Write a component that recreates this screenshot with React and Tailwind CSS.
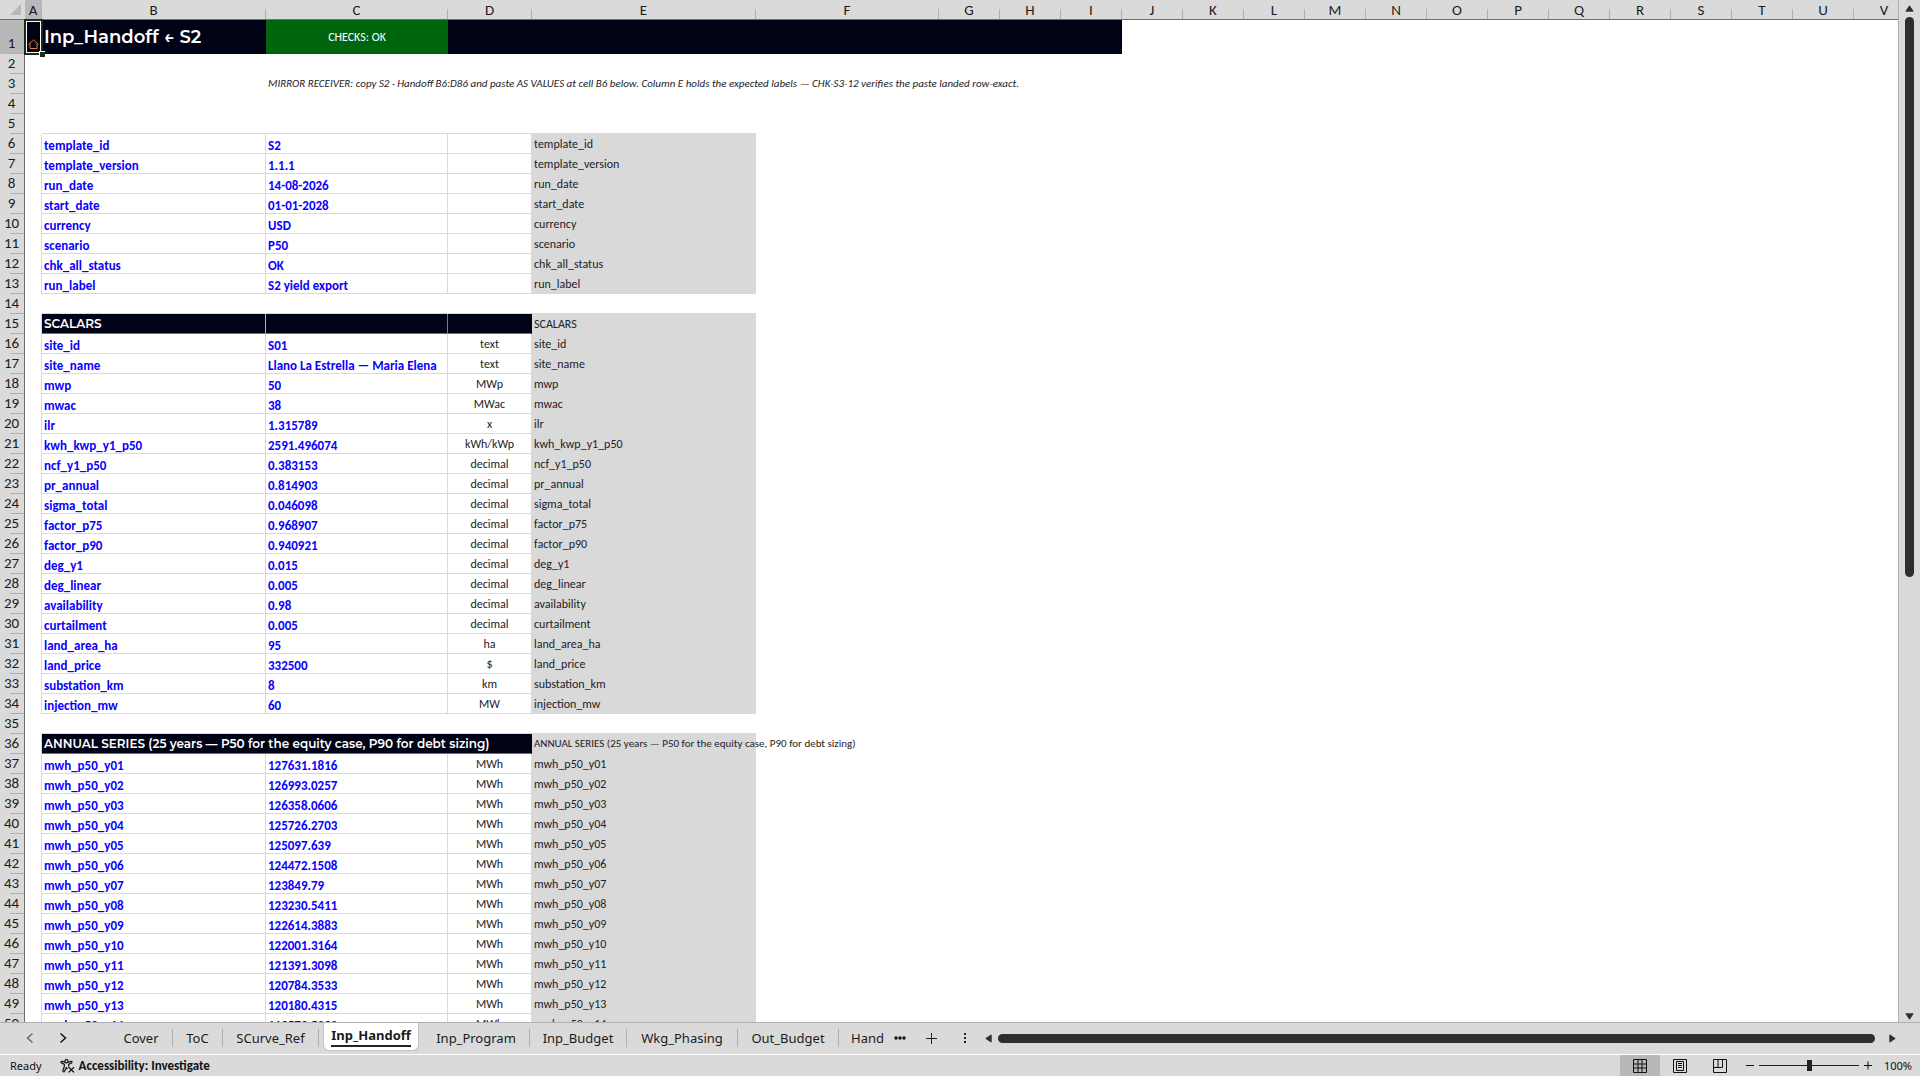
import React from 'react';

const meta = [
  ['template_id', 'S2'],
  ['template_version', '1.1.1'],
  ['run_date', '14-08-2026'],
  ['start_date', '01-01-2028'],
  ['currency', 'USD'],
  ['scenario', 'P50'],
  ['chk_all_status', 'OK'],
  ['run_label', 'S2 yield export'],
];

const scalars = [
  ['site_id', 'S01', 'text'],
  ['site_name', 'Llano La Estrella — Maria Elena', 'text'],
  ['mwp', '50', 'MWp'],
  ['mwac', '38', 'MWac'],
  ['ilr', '1.315789', 'x'],
  ['kwh_kwp_y1_p50', '2591.496074', 'kWh/kWp'],
  ['ncf_y1_p50', '0.383153', 'decimal'],
  ['pr_annual', '0.814903', 'decimal'],
  ['sigma_total', '0.046098', 'decimal'],
  ['factor_p75', '0.968907', 'decimal'],
  ['factor_p90', '0.940921', 'decimal'],
  ['deg_y1', '0.015', 'decimal'],
  ['deg_linear', '0.005', 'decimal'],
  ['availability', '0.98', 'decimal'],
  ['curtailment', '0.005', 'decimal'],
  ['land_area_ha', '95', 'ha'],
  ['land_price', '332500', '$'],
  ['substation_km', '8', 'km'],
  ['injection_mw', '60', 'MW'],
];

const annual = [
  '127631.1816', '126993.0257', '126358.0606', '125726.2703', '125097.639',
  '124472.1508', '123849.79', '123230.5411', '122614.3883', '122001.3164',
  '121391.3098', '120784.3533', '120180.4315', '119579.5293',
].map((v, i) => ['mwh_p50_y' + String(i + 1).padStart(2, '0'), v, 'MWh']);

const annualTitle = 'ANNUAL SERIES (25 years — P50 for the equity case, P90 for debt sizing)';

const columns = 'ABCDEFGHIJKLMNOPQRSTUV'.split('');

function colClass(c) {
  return {
    A: 'w-[17px]', B: 'w-[224px]', C: 'w-[182px]', D: 'w-[84px]', E: 'w-[224px]', F: 'w-[183px]',
  }[c] || 'w-[61px]';
}

function RowHead({ n, tall }) {
  return (
    <th
      scope="row"
      className={
        tall
          ? 'h-[34px] border-r border-[#6e6e6e] bg-[#b8b8b8] p-0 align-bottom font-normal'
          : 'h-5 border-r border-[#6e6e6e] bg-[#dadada] p-0 align-bottom font-normal'
      }
    >
      <div className="flex flex-col items-end">
        <span className="w-full pr-px text-center text-[15px] leading-[19px]">{n}</span>
        <span className="h-px w-[14px] bg-[#b0b0b0]" />
      </div>
    </th>
  );
}

const line = 'border-[#d9d9d9]';

function BlankRow({ n, under, children }) {
  const cell = under ? `h-5 border-b p-0 ${line}` : 'h-5 p-0';
  return (
    <tr>
      <RowHead n={n} />
      <td className="h-5 p-0" />
      <td className={cell} />
      <td className={cell}>{children}</td>
      <td className={cell} />
      <td className={cell} />
      <td colSpan={17} className="h-5 p-0" />
    </tr>
  );
}

function Expected({ children, small }) {
  return (
    <td className="h-5 bg-[#d9d9d9] p-0 pl-[2px] text-[#1c2229]">
      <div className={small ? 'w-0 whitespace-nowrap text-[11px] leading-[18px]' : 'whitespace-nowrap text-[12px] leading-[18px]'}>{children}</div>
    </td>
  );
}

function DataRow({ n, row }) {
  const [key, value, unit] = row;
  return (
    <tr>
      <RowHead n={n} />
      <td className={`h-5 border-r p-0 ${line}`} />
      <td className={`h-5 border-r border-b p-0 pl-[2px] align-bottom font-bold text-[#0a00ff] ${line}`}>
        <div className="text-[13px] leading-[15px]">{key}</div>
      </td>
      <td className={`h-5 border-r border-b p-0 pl-[2px] align-bottom font-bold text-[#0a00ff] ${line}`}>
        <div className="whitespace-nowrap text-[13px] leading-[15px]">{value}</div>
      </td>
      <td className={`h-5 border-r border-b p-0 text-center text-[12px] leading-[18px] text-[#1c2229] ${line}`}>{unit}</td>
      <Expected>{key}</Expected>
      <td colSpan={17} className="h-5 p-0" />
    </tr>
  );
}

const heading = 'h-5 border-b border-[#6d6d8c] bg-[#000215] p-0 pl-[2px] text-left text-[12px] leading-[18px] font-semibold text-white font-[Montserrat,Lato,sans-serif] whitespace-nowrap';

function Sheet() {
  return (
    <table className="w-[1915px] table-fixed border-separate border-spacing-0">
      <colgroup>
        <col className="w-[25px]" />
        {columns.map((c) => <col key={c} className={colClass(c)} />)}
      </colgroup>
      <thead>
        <tr>
          <th className="h-5 border-b border-[#6e6e6e] bg-[#dadada] p-0">
            <svg viewBox="0 0 11 11" className="ml-[10px] size-[11px]"><path d="M11 0V11H0Z" fill="#b8b8b8" /></svg>
          </th>
          {columns.map((c) => (
            <th
              key={c}
              scope="col"
              className={
                c === 'A'
                  ? 'h-5 border-b border-[#6e6e6e] bg-[#b8b8b8] p-0 font-normal'
                  : 'h-5 border-b border-[#6e6e6e] bg-[#dadada] p-0 font-normal'
              }
            >
              <div className="flex h-[19px] items-end">
                <span className="flex-1 text-center text-[15px] leading-[18px]">{c}</span>
                <span className="h-[10px] w-px bg-[#b0b0b0]" />
              </div>
            </th>
          ))}
        </tr>
      </thead>
      <tbody>
        <tr>
          <RowHead n={1} tall />
          <td className="relative h-[34px] bg-[#000215] p-0">
            <div className="absolute -inset-px border-2 border-[#1c2a1c]">
              <div className="flex h-full items-end justify-center border border-white bg-[#000215] pb-[3px]">
                <svg viewBox="0 0 11 10" className="h-[10px] w-[11px] shrink-0" fill="none" stroke="#e07a2c">
                  <path d="M.5 5.500L5.500 .8L10.500 5.500M2 4.500V9.500H9V4.500" />
                </svg>
              </div>
            </div>
            <div className="absolute -right-[3px] -bottom-[3px] z-10 size-[6px] border-t border-l border-white bg-[#1c2a1c]" />
          </td>
          <td className="h-[34px] bg-[#000215] p-0 pl-[2px] text-[18px] leading-6 font-semibold whitespace-nowrap text-white font-[Montserrat,Lato,sans-serif]">
            Inp_Handoff ← S2
          </td>
          <td className="h-[34px] bg-[#00650f] p-0 text-center text-[12px] text-white">CHECKS: OK</td>
          <td colSpan={6} className="h-[34px] bg-[#000215] p-0" />
          <td colSpan={13} className="h-[34px] p-0" />
        </tr>
        <BlankRow n={2} />
        <BlankRow n={3}>
          <div className="w-0 pl-[2px] text-[11px] leading-[18px] whitespace-nowrap text-[#1c2229] italic">
            MIRROR RECEIVER: copy S2 · Handoff B6:D86 and paste AS VALUES at cell B6 below. Column E holds the expected labels — CHK-S3-12 verifies the paste landed row-exact.
          </div>
        </BlankRow>
        <BlankRow n={4} />
        <BlankRow n={5} under />
        {meta.map((r, i) => <DataRow key={r[0]} n={6 + i} row={r} />)}
        <BlankRow n={14} under />
        <tr>
          <RowHead n={15} />
          <td className={`h-5 border-r p-0 ${line}`} />
          <td className={`${heading} border-r border-r-[#a9b8bd]`}>SCALARS</td>
          <td className={`${heading} border-r border-r-[#6f78a8]`} />
          <td className={`${heading} border-r border-r-[#000215]`} />
          <Expected>SCALARS</Expected>
          <td colSpan={17} className="h-5 p-0" />
        </tr>
        {scalars.map((r, i) => <DataRow key={r[0]} n={16 + i} row={r} />)}
        <BlankRow n={35} under />
        <tr>
          <RowHead n={36} />
          <td className={`h-5 border-r p-0 ${line}`} />
          <td colSpan={3} className={`${heading} border-r border-r-[#000215]`}>{annualTitle}</td>
          <Expected small>{annualTitle}</Expected>
          <td colSpan={17} className="h-5 p-0" />
        </tr>
        {annual.map((r, i) => <DataRow key={r[0]} n={37 + i} row={r} />)}
      </tbody>
    </table>
  );
}

const tabs = [
  ['Cover', 'w-[63px]'],
  ['ToC', 'w-[50px]'],
  ['SCurve_Ref', 'w-24'],
  ['Inp_Handoff', 'w-[104px]'],
  ['Inp_Program', 'w-[107px]'],
  ['Inp_Budget', 'w-[97px]'],
  ['Wkg_Phasing', 'w-[111px]'],
  ['Out_Budget', 'w-[101px]'],
];

function Tri({ d, className }) {
  return <svg viewBox="0 0 10 10" className={className} fill="#2e2e2e" stroke="#2e2e2e" strokeLinejoin="round"><path d={d} /></svg>;
}

function TabBar() {
  return (
    <div className="flex h-8 shrink-0 items-start border-t border-[#b0b0b0] bg-[#dadada] font-['Noto_Sans',sans-serif] text-[13px]">
      <nav className="flex h-[30px] items-center">
        <button aria-label="Previous sheets" className="ml-5 flex w-5 justify-center">
          <svg viewBox="0 0 8 12" className="h-3 w-2" fill="none" stroke="#666" strokeWidth="1.4"><path d="M6.5 1.5L1.5 6L6.5 10.5" /></svg>
        </button>
        <button aria-label="Next sheets" className="ml-[13px] flex w-5 justify-center">
          <svg viewBox="0 0 8 12" className="h-3 w-2" fill="none" stroke="#111" strokeWidth="1.5"><path d="M1.5 1.5L6.500 6L1.500 10.5" /></svg>
        </button>
        <div className="ml-[37px] flex h-[30px]">
          {tabs.map(([t, w]) =>
            t === 'Inp_Handoff' ? (
              <button key={t} className={`flex justify-center ${w}`}>
                <span className="flex h-7 w-24 flex-col items-center rounded-b-md border-x border-b border-[#c4c4c4] bg-white pt-[2px] font-bold">
                  <span className="border-b-2 border-[#1c2a1c] leading-5">{t}</span>
                </span>
              </button>
            ) : (
              <button key={t} className={`flex items-center justify-center ${w}`}>
                <span className="flex-1 pt-px text-center">{t}</span>
                <span className="h-[18px] w-px bg-[#b0b0b0]" />
              </button>
            ),
          )}
          <button className="ml-3 flex items-center pt-px">Hand</button>
        </div>
        <button aria-label="More sheets" className="ml-2 flex w-4 justify-center">
          <svg viewBox="0 0 12 4" className="h-1 w-3" fill="#111"><circle cx="2" cy="2" r="1.7" /><circle cx="6" cy="2" r="1.7" /><circle cx="10" cy="2" r="1.7" /></svg>
        </button>
        <button aria-label="New sheet" className="ml-[14px] flex w-5 justify-center">
          <svg viewBox="0 0 11 11" className="size-[11px]" stroke="#222"><path d="M5.5 0V11M0 5.5H11" /></svg>
        </button>
        <span className="ml-[13px] flex w-5 justify-center">
          <svg viewBox="0 0 2 12" className="h-3 w-[2px]" fill="#222"><path d="M0 1h2v2H0zM0 5h2v2H0zM0 9h2v2H0z" /></svg>
        </span>
      </nav>
      <div className="flex h-[30px] min-w-0 flex-1 items-center pr-[23px] pl-[9px]">
        <Tri className="size-[9px]" d="M8 1V9L2 5Z" />
        <div className="mr-[13px] ml-[5px] h-[9px] flex-1 rounded-full bg-[#2e2e2e]" />
        <Tri className="size-[9px]" d="M2 1V9L8 5Z" />
      </div>
    </div>
  );
}

function StatusBar() {
  return (
    <div className="flex h-[22px] shrink-0 items-center border-t border-white bg-[#dadada] font-['Noto_Sans',sans-serif] text-[11px] leading-[18px] text-[#111]">
      <span className="ml-[10px]">Ready</span>
      <button className="ml-[18px] flex items-center gap-1 font-[Carlito,Lato,sans-serif] text-[13px] font-bold">
        <svg viewBox="0 0 15 14" className="h-[14px] w-[15px]" fill="none" stroke="#111" strokeWidth="1.2" strokeLinecap="round" strokeLinejoin="round">
          <circle cx="6.5" cy="2.3" r="1.6" />
          <path d="M4.8 3.3L2.2 2.4C.8 2 .6 3.600 1.700 4.100L4.300 5.300V7.700L2.900 11.500C2.600 12.900 4 13.200 4.500 12.300L6.500 8.600L7.200 9.600M8.200 3.300L10.800 2.400C12.200 2 12.400 3.600 11.300 4.100L8.700 5.300V7.300M9 8.500L13.700 13M13.700 8.500L9 13" />
        </svg>
        Accessibility: Investigate
      </button>
      <div className="ml-auto flex h-full items-center">
        <button aria-label="Normal view" className="flex h-full w-10 items-center justify-center bg-[#b8b8b8]">
          <svg viewBox="0 0 14 14" className="size-[14px]" fill="none" stroke="#111"><path d="M.5 .5H13.500V13.500H.5ZM5 .5V13.500M9 .5V13.500M.5 5H13.500M.5 9H13.500" /></svg>
        </button>
        <button aria-label="Page layout view" className="flex h-full w-10 items-center justify-center">
          <svg viewBox="0 0 14 14" className="size-[14px]" fill="none" stroke="#111"><path d="M.5 .5H13.500V13.500H.5ZM3.500 2.500H10.500V11.500H3.500ZM5 4.500H9M5 6.500H9M5 8.500H9" /></svg>
        </button>
        <button aria-label="Page break preview" className="flex h-full w-10 items-center justify-center">
          <svg viewBox="0 0 14 14" className="size-[14px]" fill="none" stroke="#111"><path d="M.5 .5H13.500V13.500H.5ZM.5 8.500H9.500V.5M5 .5V8.500" /></svg>
        </button>
        <button aria-label="Zoom out" className="ml-[6px] flex w-2">
          <svg viewBox="0 0 8 9" className="h-[9px] w-2" stroke="#111"><path d="M0 4.500H8" /></svg>
        </button>
        <input
          type="range"
          min="10"
          max="190"
          defaultValue="100"
          aria-label="Zoom"
          className="mx-[5px] h-3 w-[100px] appearance-none bg-[linear-gradient(#222,#222)] bg-[length:100%_1px] bg-center bg-no-repeat [&::-webkit-slider-thumb]:h-[11px] [&::-webkit-slider-thumb]:w-[5px] [&::-webkit-slider-thumb]:appearance-none [&::-webkit-slider-thumb]:bg-[#222]"
        />
        <button aria-label="Zoom in" className="flex w-2">
          <svg viewBox="0 0 8 9" className="h-[9px] w-2" stroke="#111"><path d="M0 4.500H8M4 .5V8.500" /></svg>
        </button>
        <span className="w-12 pr-2 text-right">100%</span>
      </div>
    </div>
  );
}

export default function App() {
  return (
    <div className="flex h-screen flex-col overflow-hidden bg-[#dadada] font-[Carlito,Lato,sans-serif] text-[#1b1b1b]">
      <div className="flex min-h-0 flex-1">
        <main className="min-w-0 flex-1 overflow-hidden border-r border-[#b0b0b0] bg-white">
          <Sheet />
        </main>
        <div className="flex w-[21px] shrink-0 flex-col items-center bg-[#dadada] pt-1 pb-px">
          <Tri className="size-[9px]" d="M1 8H9L5 2Z" />
          <div className="mt-1 h-[560px] w-[9px] rounded-full bg-[#2e2e2e]" />
          <Tri className="mt-auto size-[9px]" d="M1 2H9L5 8Z" />
        </div>
      </div>
      <TabBar />
      <StatusBar />
    </div>
  );
}
